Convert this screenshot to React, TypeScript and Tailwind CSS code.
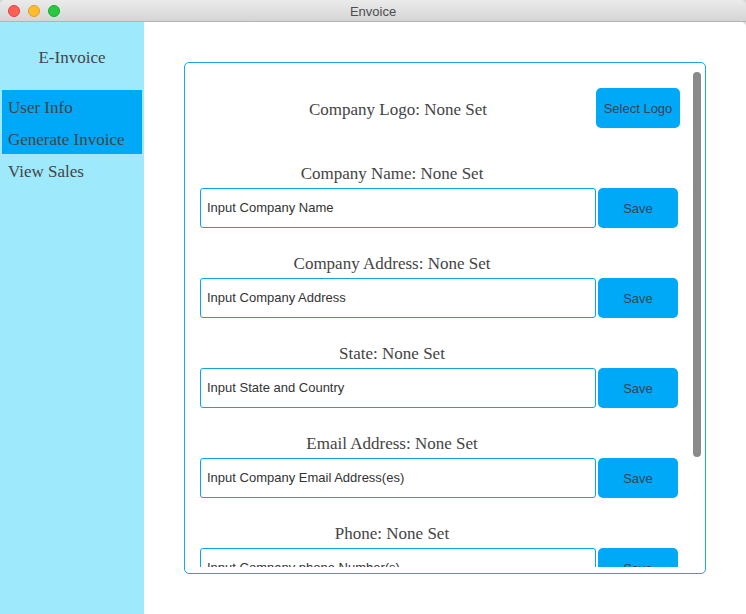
import React from 'react'

const serif = { fontFamily: '"Liberation Serif", "Times New Roman", serif' }
const sans = { fontFamily: '"Liberation Sans", Arial, sans-serif' }

const fields = [
  { label: 'Company Name: None Set', placeholder: 'Input Company Name' },
  { label: 'Company Address: None Set', placeholder: 'Input Company Address' },
  { label: 'State: None Set', placeholder: 'Input State and Country' },
  { label: 'Email Address: None Set', placeholder: 'Input Company Email Address(es)' },
  { label: 'Phone: None Set', placeholder: 'Input Company phone Number(s)' },
]

// Title bar with traffic lights
function TitleBar() {
  return (
    <div className="relative h-[22px] flex items-center bg-gradient-to-b from-[#ebebeb] to-[#d5d5d5] border-b border-[#b4b4b4] rounded-t-[5px]">
      <div className="flex items-center gap-[8px] pl-[8px]">
        <span className="w-[12px] h-[12px] rounded-full bg-[#fe5f57] border border-[#e0443e]" />
        <span className="w-[12px] h-[12px] rounded-full bg-[#febc2e] border border-[#dea123]" />
        <span className="w-[12px] h-[12px] rounded-full bg-[#28c840] border border-[#1aab29]" />
      </div>
      <div className="absolute inset-0 pt-[2px] flex items-center justify-center text-[13px] text-[#4d4d4d]" style={sans}>
        Envoice
      </div>
    </div>
  )
}

export default function App() {
  return (
    <div className="w-[746px] h-[614px] flex flex-col overflow-hidden bg-[#d6d6d6]">
      <TitleBar />
      <div className="flex-1 flex min-h-0">
        {/* Sidebar */}
        <div className="w-[144px] bg-[#9fe9fd] flex flex-col pt-[20px] text-[17px] text-[#444]" style={serif}>
          <div className="h-[32px] leading-[32px] text-center mb-[16px]">E-Invoice</div>
          <div className="mx-[2px] bg-[#00a9f8]">
            <div className="h-[32px] leading-[32px] pl-[6px] pt-[2px]">User Info</div>
            <div className="h-[32px] leading-[32px] pl-[6px] pt-[2px]">Generate Invoice</div>
          </div>
          <div className="h-[32px] leading-[32px] pl-[8px] pt-[2px]">View Sales</div>
        </div>

        {/* Main */}
        <div className="flex-1 flex bg-white p-[40px] rounded-tr-[5px]">
          <div className="relative flex-1 border border-[#17a7ea] rounded-[5px] p-[6px]">
            <div className="h-full overflow-hidden">
              <div className="pl-[9px] pt-[19px]">
                {/* Logo row */}
                <div className="flex items-center h-[40px] mb-[10px]">
                  <div className="w-[396px] pt-[3px] text-center text-[17px] text-[#444]" style={serif}>
                    Company Logo: None Set
                  </div>
                  <button
                    className="w-[84px] h-[40px] pt-[2px] rounded-[5px] bg-[#00a9f8] text-[13px] text-[#3b434d]"
                    style={sans}
                  >
                    Select Logo
                  </button>
                </div>

                {fields.map((f) => (
                  <div key={f.label} className="pt-[26px]">
                    <div className="w-[384px] h-[20px] leading-[20px] text-center text-[17px] text-[#444] mb-[4px]" style={serif}>
                      {f.label}
                    </div>
                    <div className="flex gap-[2px]">
                      <div
                        className="w-[396px] h-[40px] border border-[#0aa3ef] rounded-[3px] flex items-center pl-[6px] text-[13px] text-[#333]"
                        style={sans}
                      >
                        {f.placeholder}
                      </div>
                      <button
                        className="w-[80px] h-[40px] pt-[2px] rounded-[5px] bg-[#00a9f8] text-[13px] text-[#3b434d]"
                        style={sans}
                      >
                        Save
                      </button>
                    </div>
                  </div>
                ))}
              </div>
            </div>
            {/* Scrollbar */}
            <div className="absolute right-[4px] top-[9px] w-[8px] h-[385px] rounded-full bg-[#8a8a8a]" />
          </div>
        </div>
      </div>
    </div>
  )
}
